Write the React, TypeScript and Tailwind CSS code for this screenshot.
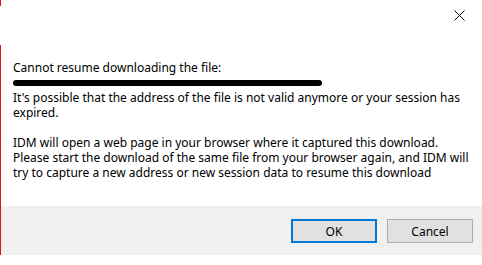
export default function App() {
  return (
    <div className="flex h-[265px] w-[482px] bg-white text-[12px] leading-[15px] text-black" style={{ fontFamily: '"Noto Sans", "Open Sans", sans-serif' }}>
      {/* edge of the window behind */}
      <div className="flex w-px flex-col">
        <div className="h-[6px] bg-[#e81123]" />
        <div className="h-[39px]" />
        <div className="h-[210px] bg-[#e81123]" />
      </div>

      <div className="flex flex-1 flex-col">
        <div className="flex h-[30px] items-center justify-end pr-[17px]">
          <svg width="11" height="11" viewBox="0 0 11 11" className="text-black">
            <path d="M0.5 0.5 L10.5 10.5 M10.5 0.5 L0.5 10.5" stroke="currentColor" strokeWidth="1" />
          </svg>
        </div>

        <div className="h-[176px] pl-[12px] pt-[30px]">
          <p>Cannot resume downloading the file:</p>
          <div className="flex h-[15px] items-center">
            <span className="block h-[6px] w-[309px] rounded-full bg-black" />
          </div>
          <p>It's possible that the address of the file is not valid anymore or your session has</p>
          <p>expired.</p>
          <p className="h-[15px]" />
          <p>IDM will open a web page in your browser where it captured this download.</p>
          <p>Please start the download of the same file from your browser again, and IDM will</p>
          <p>try to capture a new address or new session data to resume this download</p>
        </div>

        <div className="flex h-[49px] items-start justify-end gap-[10px] bg-[#f0f0f0] pr-[9px] pt-[13px]">
          <button type="button" className="flex h-[24px] w-[86px] items-center justify-center border-2 border-[#0078d7] bg-[#e1e1e1] text-[12px]">
            OK
          </button>
          <button type="button" className="flex h-[24px] w-[86px] items-center justify-center border border-[#adadad] bg-[#e1e1e1] text-[12px]">
            Cancel
          </button>
        </div>

        <div className="h-[10px]" />
      </div>
    </div>
  );
}
